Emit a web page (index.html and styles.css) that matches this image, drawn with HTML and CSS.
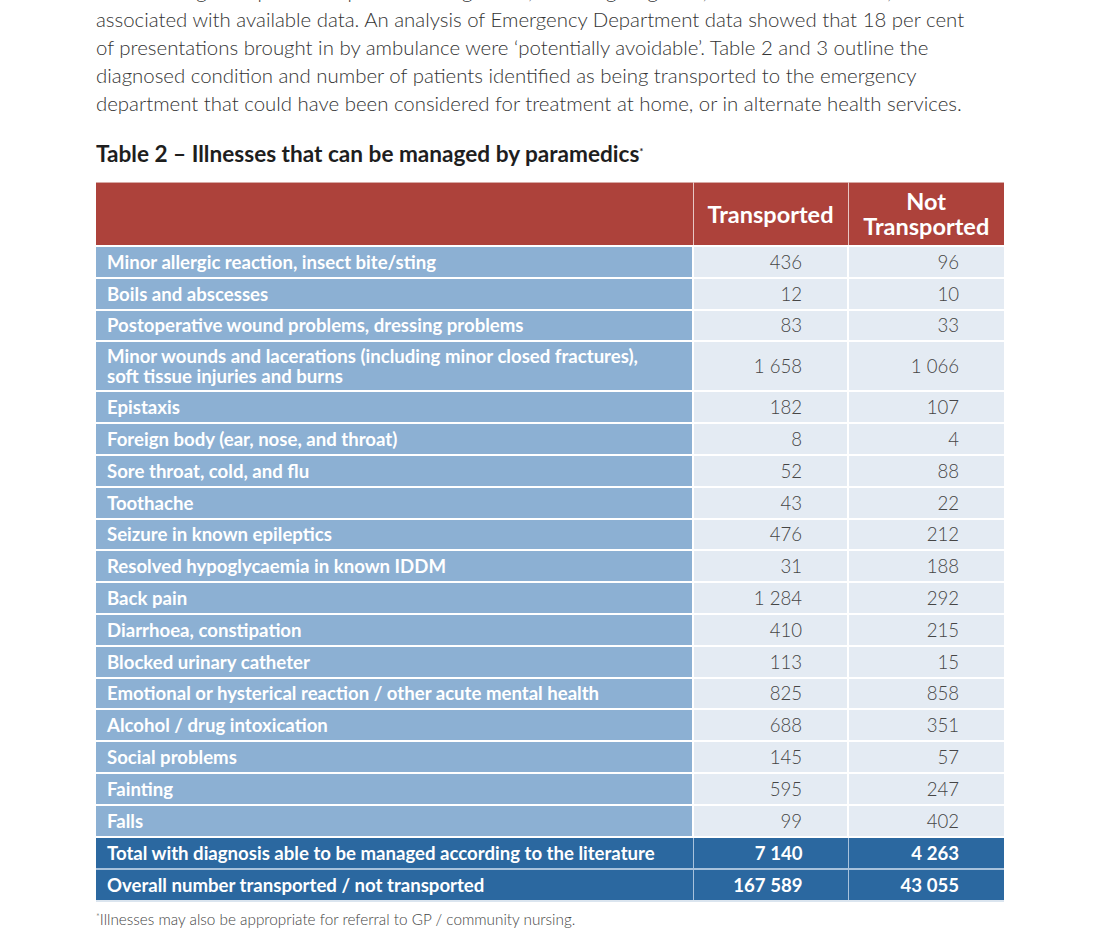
FILE: index.html
```html
<!DOCTYPE html>
<html lang="en">
<head>
<meta charset="utf-8">
<title>Table 2</title>
<link rel="stylesheet" href="styles.css">
</head>
<body>
<div class="page">
  <p class="intro"><span class="ln">and the range of options for patient management, including diagnosis, costs and outcomes,</span><span class="ln">associated with available data. An analysis of Emergency Department data showed that 18 per cent</span><span class="ln">of presentations brought in by ambulance were ‘potentially avoidable’. Table 2 and 3 outline the</span><span class="ln">diagnosed condition and number of patients identified as being transported to the emergency</span><span class="ln">department that could have been considered for treatment at home, or in alternate health services.</span></p>
  <h2 class="title">Table 2 – Illnesses that can be managed by paramedics<sup>*</sup></h2>
  <table class="data">
    <colgroup><col class="c1"><col class="c2"><col class="c3"></colgroup>
    <thead>
      <tr><th></th><th>Transported</th><th><span class="hl">Not</span><span class="hl">Transported</span></th></tr>
    </thead>
    <tbody>
      <tr><td>Minor allergic reaction, insect bite/sting</td><td>436</td><td>96</td></tr>
      <tr><td>Boils and abscesses</td><td>12</td><td>10</td></tr>
      <tr><td>Postoperative wound problems, dressing problems</td><td>83</td><td>33</td></tr>
      <tr class="two"><td>Minor wounds and lacerations (including minor closed fractures),<br>soft tissue injuries and burns</td><td>1 658</td><td>1 066</td></tr>
      <tr><td>Epistaxis</td><td>182</td><td>107</td></tr>
      <tr><td>Foreign body (ear, nose, and throat)</td><td>8</td><td>4</td></tr>
      <tr><td>Sore throat, cold, and flu</td><td>52</td><td>88</td></tr>
      <tr><td>Toothache</td><td>43</td><td>22</td></tr>
      <tr><td>Seizure in known epileptics</td><td>476</td><td>212</td></tr>
      <tr><td>Resolved hypoglycaemia in known IDDM</td><td>31</td><td>188</td></tr>
      <tr><td>Back pain</td><td>1 284</td><td>292</td></tr>
      <tr><td>Diarrhoea, constipation</td><td>410</td><td>215</td></tr>
      <tr><td>Blocked urinary catheter</td><td>113</td><td>15</td></tr>
      <tr><td>Emotional or hysterical reaction / other acute mental health</td><td>825</td><td>858</td></tr>
      <tr><td>Alcohol / drug intoxication</td><td>688</td><td>351</td></tr>
      <tr><td>Social problems</td><td>145</td><td>57</td></tr>
      <tr><td>Fainting</td><td>595</td><td>247</td></tr>
      <tr><td>Falls</td><td>99</td><td>402</td></tr>
    </tbody>
    <tfoot>
      <tr><td>Total with diagnosis able to be managed according to the literature</td><td>7 140</td><td>4 263</td></tr>
      <tr><td>Overall number transported / not transported</td><td>167 589</td><td>43 055</td></tr>
    </tfoot>
  </table>
  <p class="note"><sup>*</sup>Illnesses may also be appropriate for referral to GP / community nursing.</p>
</div>
</body>
</html>
```

FILE: styles.css
```css
html, body {
  margin: 0;
  padding: 0;
  background: #ffffff;
}
body {
  font-family: Lato, "Open Sans", sans-serif;
  color: #3a3a3a;
}
.page {
  width: 910px;
  margin-left: 96px;
  margin-top: -23px;
}
.intro {
  margin: 0;
  font-size: 20.4px;
  line-height: 28px;
  font-weight: 300;
  color: #333;
}
.intro .ln {
  display: block;
  white-space: nowrap;
}
.title {
  margin: 23px 0 0 0;
  font-size: 22.6px;
  line-height: 28px;
  font-weight: 700;
  color: #1e1e1e;
}
.title sup, .note sup {
  font-size: 9px;
  vertical-align: top;
  position: relative;
  top: -2px;
}
.data {
  margin-top: 14px;
  width: 908px;
  border-collapse: collapse;
  table-layout: fixed;
}
.c1 { width: 597px; }
.c2 { width: 155px; }
.c3 { width: 156px; }
.data th {
  background: #ad423b;
  color: #fff;
  font-size: 23.5px;
  font-weight: 700;
  line-height: 25px;
  height: 62px;
  padding: 0;
  text-align: center;
  border: 1px solid #e8c7c4;
  border-top: 1px solid #d7a9a5;
  border-bottom: 2px solid #fff;
}
.data th .hl {
  display: block;
  line-height: 25px;
}
.data th:first-child { border-left: 0; }
.data th:last-child { border-right: 0; }
.data td {
  height: 29.8px;
  padding: 0;
  border: 2px solid #fff;
  border-top: 0;
  font-size: 18.6px;
  line-height: 20px;
  vertical-align: middle;
}
.data tbody td {
  background: #e4ebf3;
  color: #454545;
  font-weight: 300;
  text-align: right;
  padding-right: 45px;
}
.data tbody td:first-child {
  background: #8cb0d3;
  color: #fff;
  font-weight: 700;
  text-align: left;
  padding: 0 0 0 11px;
  border-left: 0;
}
.data td:last-child { border-right: 0; }
.data tbody tr.two td { height: 48px; }
.data tfoot td {
  background: #2b68a0;
  color: #fff;
  font-weight: 700;
  text-align: right;
  padding-right: 45px;
  height: 30px;
  border: 1px solid #a8c2dc;
  border-bottom: 2px solid #a8c2dc;
  border-top: 0;
}
.data tfoot td:first-child {
  text-align: left;
  padding: 0 0 0 11px;
  border-left: 0;
}
.data tfoot td:last-child { border-right: 0; }
.data tfoot tr:last-child td { border-bottom: 2px solid #dbe5ef; }
.data tfoot tr:first-child td { border-top: 2px solid #fff; }
.note {
  margin: 8px 0 0 0;
  font-size: 15.3px;
  line-height: 18px;
  color: #444;
  font-weight: 300;
}
```
